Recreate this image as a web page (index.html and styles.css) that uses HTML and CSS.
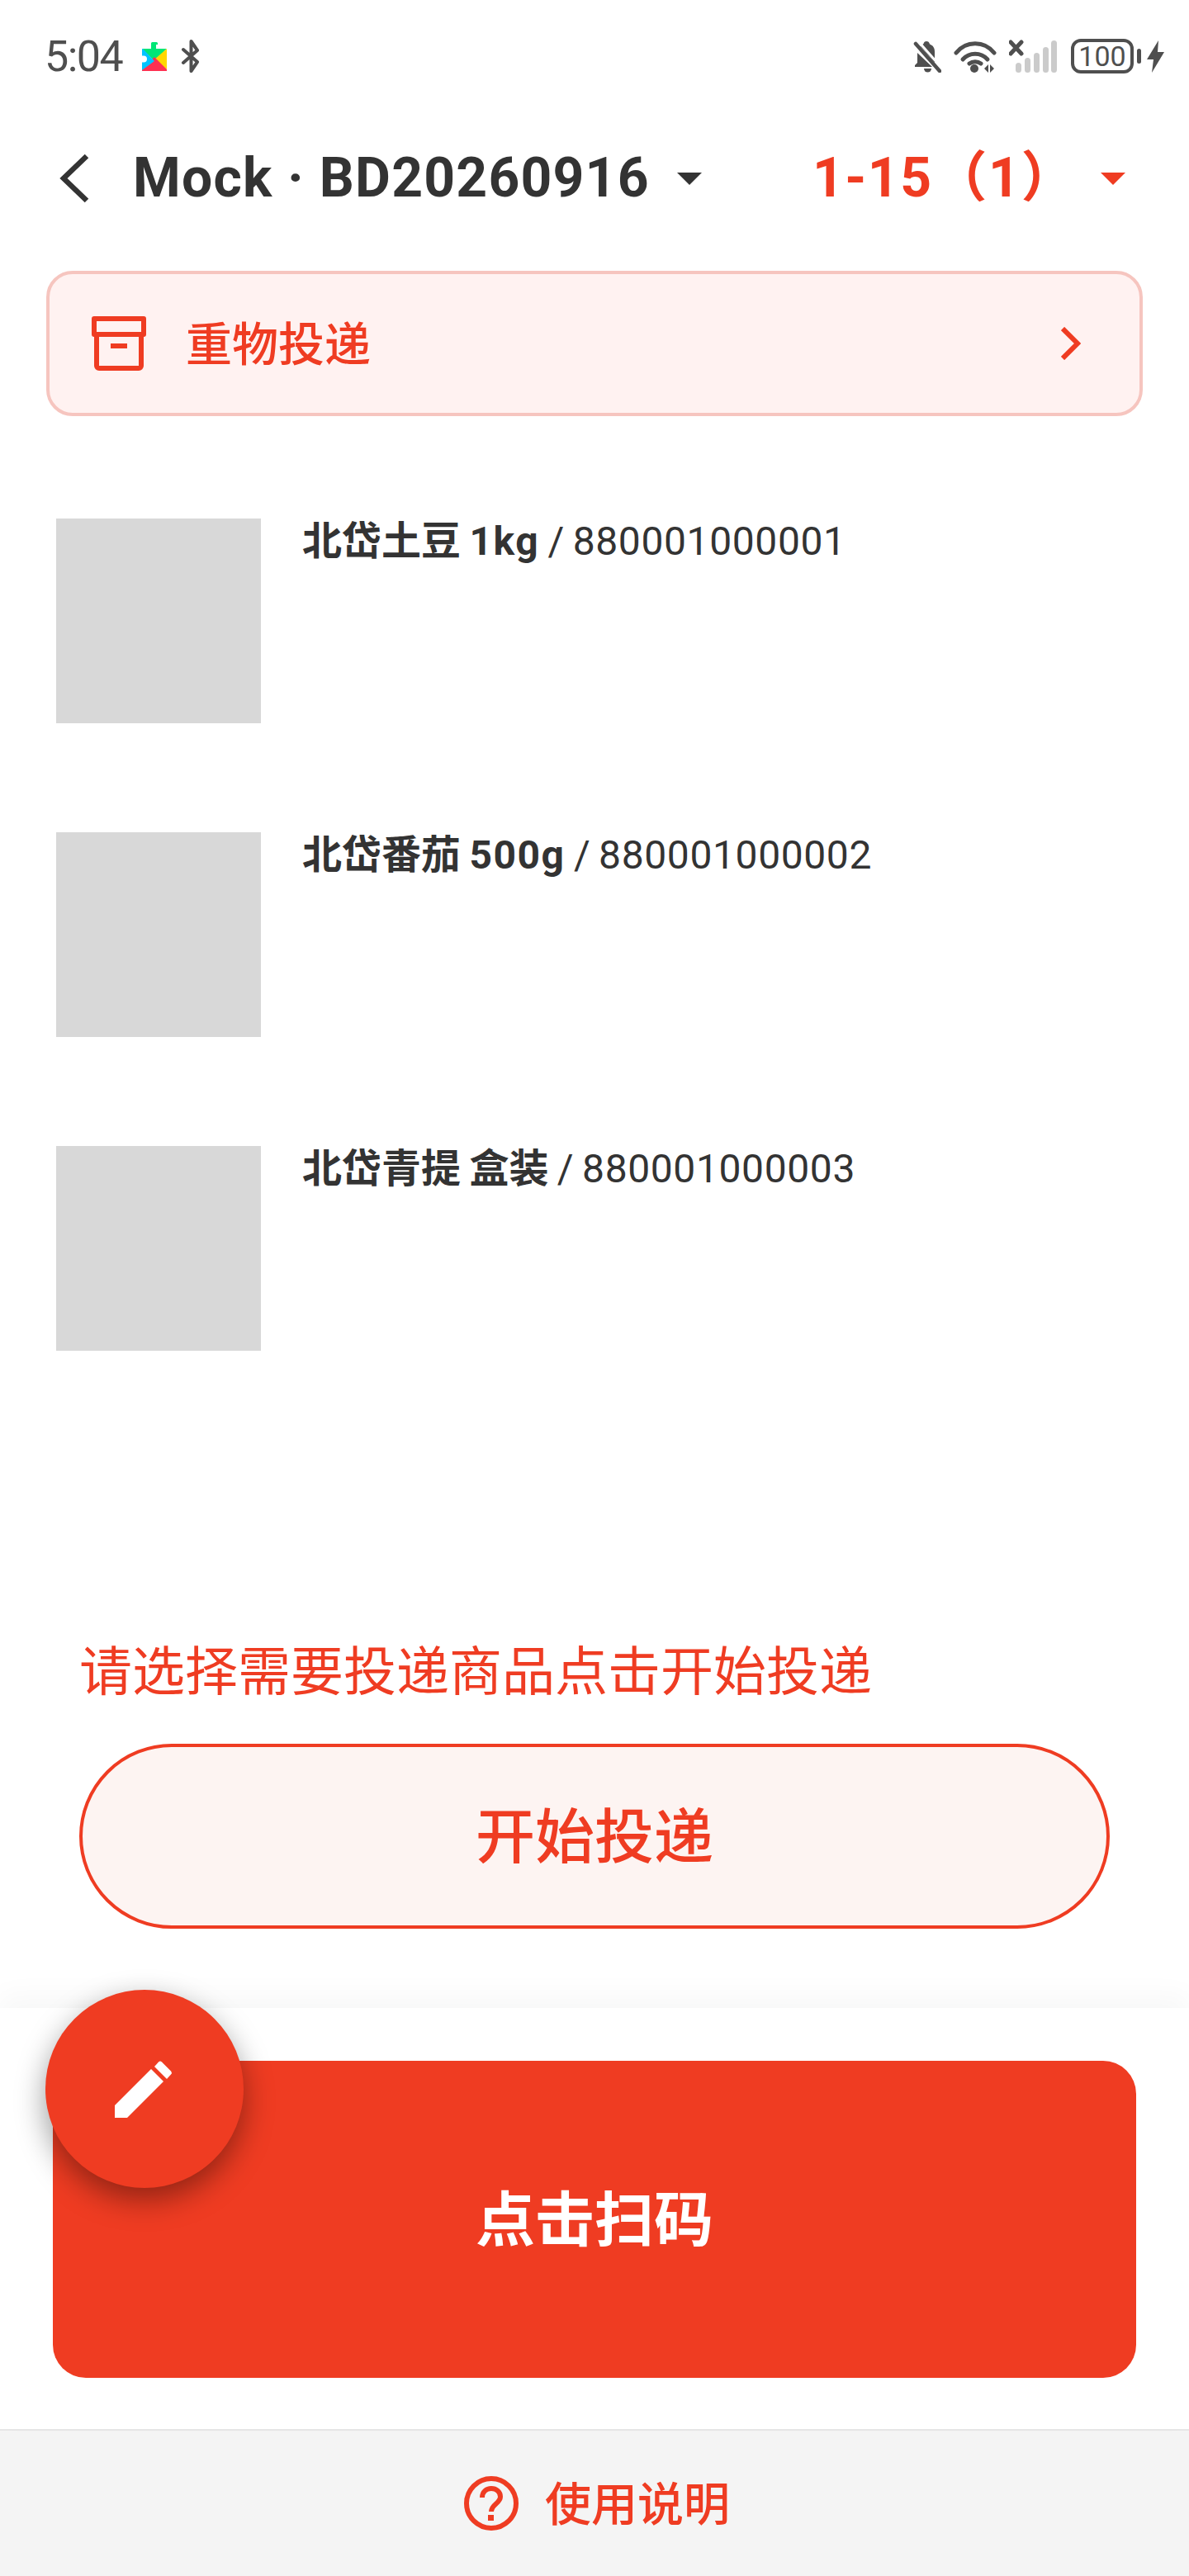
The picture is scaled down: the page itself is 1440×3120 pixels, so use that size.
FILE: index.html
```html
<!DOCTYPE html>
<html lang="zh">
<head>
    <meta charset="utf-8">
    <title>Mock BD20260916</title>
    <link rel="stylesheet" href="styles.css">
</head>
<body>
    <div id="app">
        <div class="status-bar">
            <div class="status-left">
                <span class="clock">5:04</span>
                <svg class="play-icon" viewBox="0 0 30 36">
                    <path d="M0 9h30L15 24z" fill="#00e676"/>
                    <path d="M11 9V2.500a1.500 1.500 0 0 1 1.500-1.500h5a1.500 1.500 0 0 1 1.500 1.500V4h-2v5z" fill="#00e676"/>
                    <path d="M30 9v25L15 22z" fill="#ffd600"/>
                    <path d="M1 36h28a1 1 0 0 0 1-2L15 19 0 34a1 1 0 0 0 1 2z" fill="#ff3051"/>
                    <path d="M0 10a1 1 0 0 1 1-1l14 15L0 35v-9.500h2a4 4 0 0 0 0-8H0z" fill="#00c3ff"/>
                </svg>
                <svg class="bt-icon" viewBox="0 0 25 40">
                    <path d="M3 12l17 15-7.500 11V2L20 13 3 28" fill="none" stroke="#4f4f4f" stroke-width="4" stroke-linecap="round" stroke-linejoin="round"/>
                </svg>
            </div>
            <div class="status-right">
                <svg class="bell-icon" viewBox="0 0 34 40">
                    <path d="M16 2c-2 0-3 1-3.500 3L9 8l17 20V15c0-5-2-8-6-9.500C19.500 3 18 2 16 2z" fill="#4f4f4f"/>
                    <path d="M5 16v12l-3 3v2h21z" fill="#4f4f4f"/>
                    <path d="M13 35h9a4.500 4.500 0 0 1-9 0z" fill="#4f4f4f"/>
                    <path d="M7 3l29 33" stroke="#fff" stroke-width="3"/>
                    <path d="M3 5l29 33" stroke="#4f4f4f" stroke-width="4.500" stroke-linecap="round"/>
                </svg>
                <svg class="wifi-icon" viewBox="0 0 52 40">
                    <g fill="none" stroke="#4f4f4f" stroke-width="5" stroke-linecap="round">
                        <path d="M3 16c12-15 34-15 46 0"/>
                        <path d="M11 24c8-9 22-9 30 0"/>
                        <path d="M19 29c4-3 10-3 14 0"/>
                    </g>
                    <circle cx="25" cy="35" r="5" fill="#4f4f4f"/>
                    <path d="M37 35l5-5v10zM44 30l5 5-5 5z" fill="#4f4f4f"/>
                </svg>
                <svg class="signal-icon" viewBox="0 0 58 40">
                    <path d="M2 3l13 14M15 3L2 17" stroke="#4f4f4f" stroke-width="5" stroke-linecap="round"/>
                    <g fill="#cbcbcb">
                        <rect x="8" y="28" width="7" height="12" rx="3.500"/>
                        <rect x="19" y="22" width="7" height="18" rx="3.500"/>
                        <rect x="30" y="16" width="7" height="24" rx="3.500"/>
                        <rect x="41" y="9" width="7" height="31" rx="3.500"/>
                        <rect x="51" y="1" width="7" height="39" rx="3.500"/>
                    </g>
                </svg>
                <div class="battery"><span>100</span></div>
                <div class="battery-nub"></div>
                <svg class="bolt-icon" viewBox="0 0 21 39">
                    <path d="M14 0L0 23h8L6 39l15-25h-8z" fill="#4f4f4f"/>
                </svg>
            </div>
        </div>

        <div class="title-bar">
            <svg class="back-icon" viewBox="0 0 36 60">
                <path d="M33 3L5 30l28 27" fill="none" stroke="#333" stroke-width="6.500"/>
            </svg>
            <span class="title">Mock · BD20260916</span>
            <span class="caret dark"></span>
            <span class="batch">1-15（1）</span>
            <span class="caret red"></span>
        </div>

        <div class="banner">
            <svg class="box-icon" viewBox="0 0 66 66">
                <path d="M6 22h54v38a3 3 0 0 1-3 3H9a3 3 0 0 1-3-3zM3 3h60v19H3z" fill="none" stroke="#ef3c22" stroke-width="6" stroke-linejoin="round"/>
                <rect x="23" y="33" width="20" height="6" fill="#ef3c22"/>
            </svg>
            <span class="banner-text">重物投递</span>
            <svg class="chevron-icon" viewBox="0 0 24 40">
                <path d="M2 2l18 18L2 38" fill="none" stroke="#ef3c22" stroke-width="6"/>
            </svg>
        </div>

        <div class="products">
            <div class="product">
                <div class="thumb"></div>
                <p class="product-name"><b>北岱土豆 <span class="unit">1kg</span></b> / <span class="code">880001000001</span></p>
            </div>
            <div class="product">
                <div class="thumb"></div>
                <p class="product-name"><b>北岱番茄 <span class="unit">500g</span></b> / <span class="code">880001000002</span></p>
            </div>
            <div class="product">
                <div class="thumb"></div>
                <p class="product-name"><b>北岱青提 盒装</b> / <span class="code">880001000003</span></p>
            </div>
        </div>

        <div class="deliver">
            <p class="hint">请选择需要投递商品点击开始投递</p>
            <button class="start-btn">开始投递</button>
        </div>

        <div class="scan-panel">
            <button class="fab">
                <svg viewBox="0 0 72 72" width="72" height="72">
                    <path d="M0 72V57L44 13l15 15-44 44z" fill="#fff" transform="translate(0 -1)"/>
                    <path d="M48 9l5-5.500a3 3 0 0 1 4 0l11 11a3 3 0 0 1 0 4l-5 5.500z" fill="#fff"/>
                </svg>
            </button>
            <button class="scan-btn">点击扫码</button>
        </div>

        <div class="help-bar">
            <svg class="help-icon" viewBox="0 0 66 66">
                <circle cx="33" cy="33" r="30" fill="none" stroke="#ef3c22" stroke-width="6"/>
                <path d="M22 26c0-7 5-11 11-11s11 4 11 10c0 8-11 9-11 18" fill="none" stroke="#ef3c22" stroke-width="6"/>
                <rect x="29" y="47" width="7" height="7" fill="#ef3c22"/>
            </svg>
            <span class="help-text">使用说明</span>
        </div>
    </div>
</body>
</html>
```

FILE: styles.css
```css
* {
    box-sizing: border-box;
}

body {
    margin: 0;
    background: #fff;
    font-family: Roboto, "Noto Sans CJK SC", sans-serif;
    color: #333;
}

#app {
    display: flex;
    flex-direction: column;
    width: 1440px;
    height: 3120px;
    overflow: hidden;
}

.status-bar {
    display: flex;
    justify-content: space-between;
    align-items: center;
    height: 136px;
    padding: 0 30px 0 54px;
}

.status-left,
.status-right {
    display: flex;
    align-items: center;
}

.clock {
    font-size: 52px;
    color: #4f4f4f;
    letter-spacing: -1.500px;
}

.play-icon {
    width: 30px;
    height: 36px;
    margin-left: 24px;
}

.bt-icon {
    width: 25px;
    height: 40px;
    margin-left: 17px;
}

.bell-icon {
    width: 34px;
    height: 40px;
}

.wifi-icon {
    width: 52px;
    height: 40px;
    margin-left: 15px;
}

.signal-icon {
    width: 58px;
    height: 40px;
    margin-left: 15px;
}

.battery {
    display: flex;
    align-items: center;
    justify-content: center;
    width: 76px;
    height: 42px;
    margin-left: 17px;
    border: 4px solid #4f4f4f;
    border-radius: 12px;
    font-size: 34px;
    color: #4f4f4f;
}

.battery-nub {
    width: 5px;
    height: 18px;
    margin-left: 4px;
    border-radius: 3px;
    background: #4f4f4f;
}

.bolt-icon {
    width: 21px;
    height: 39px;
    margin-left: 7px;
}

.title-bar {
    display: flex;
    align-items: center;
    height: 160px;
    padding-left: 72px;
}

.back-icon {
    width: 36px;
    height: 60px;
}

.title {
    width: 632px;
    margin-left: 53px;
    font-size: 66px;
    line-height: 80px;
    font-weight: 700;
    letter-spacing: 1.200px;
    white-space: nowrap;
}

.caret {
    width: 0;
    height: 0;
    border-left: 15px solid transparent;
    border-right: 15px solid transparent;
}

.caret.dark {
    margin-left: 27px;
    border-top: 15px solid #333;
}

.caret.red {
    border-top: 15px solid #ef3c22;
}

.batch {
    width: 349px;
    margin-left: 134px;
    font-size: 66px;
    line-height: 80px;
    font-weight: 700;
    letter-spacing: 1.500px;
    color: #ef3c22;
    white-space: nowrap;
}

.banner {
    display: flex;
    align-items: center;
    height: 176px;
    margin: 32px 56px 0;
    padding: 0 71px 0 51px;
    border: 4px solid #f6c5bf;
    border-radius: 32px;
    background: #fff2f1;
}

.box-icon {
    width: 66px;
    height: 66px;
}

.banner-text {
    margin: -8px 0 0 48px;
    font-size: 56px;
    font-weight: 500;
    color: #ef3c22;
    flex-grow: 1;
}

.chevron-icon {
    width: 24px;
    height: 40px;
}

.products {
    display: flex;
    flex-direction: column;
    gap: 132px;
    padding: 124px 0 0 68px;
}

.product {
    display: flex;
    align-items: flex-start;
    gap: 50px;
}

.thumb {
    width: 248px;
    height: 248px;
    background: #d8d8d8;
}

.product-name {
    margin: -4px 0 0;
    font-size: 48px;
    line-height: 64px;
    word-spacing: -1.500px;
}

.unit {
    letter-spacing: 1.500px;
}

.code {
    letter-spacing: 0.600px;
}

.deliver {
    display: flex;
    flex-direction: column;
    margin-top: 346px;
    padding: 0 96px;
}

.hint {
    margin: 0;
    font-size: 64px;
    line-height: 88px;
    color: #ef3c22;
}

.start-btn {
    height: 224px;
    margin-top: 42px;
    padding-bottom: 12px;
    border: 4px solid #ef3c22;
    border-radius: 112px;
    background: #fdf4f2;
    font-family: inherit;
    font-size: 72px;
    font-weight: 500;
    color: #ef3c22;
}

.scan-panel {
    position: relative;
    display: flex;
    flex-direction: column;
    height: 510px;
    margin-top: 96px;
    padding: 64px 64px 0;
    background: #fff;
    box-shadow: 0 -16px 32px rgba(0, 0, 0, 0.03);
}

.scan-btn {
    height: 384px;
    padding-bottom: 12px;
    border: none;
    border-radius: 40px;
    background: #ef3c22;
    font-family: inherit;
    font-size: 72px;
    font-weight: 700;
    color: #fff;
}

.fab {
    position: absolute;
    top: -22px;
    left: 55px;
    display: flex;
    align-items: center;
    justify-content: center;
    width: 240px;
    height: 240px;
    padding: 0;
    border: none;
    border-radius: 50%;
    background: #ef3c22;
    box-shadow: 0 14px 36px rgba(0, 0, 0, 0.4);
}

.help-bar {
    display: flex;
    align-items: center;
    justify-content: center;
    gap: 32px;
    height: 178px;
    padding-left: 6px;
    border-top: 2px solid #e6e6e6;
    background: #f4f4f4;
}

.help-icon {
    width: 66px;
    height: 66px;
}

.help-text {
    margin-top: -8px;
    font-size: 56px;
    font-weight: 500;
    color: #ef3c22;
}
```
